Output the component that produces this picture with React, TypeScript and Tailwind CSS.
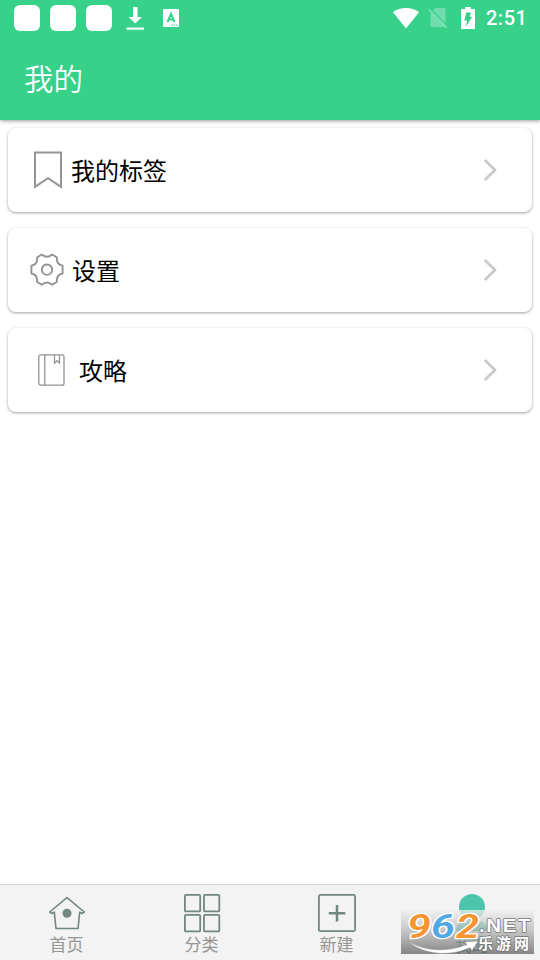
import React from "react";

const cjk = "font-['Noto_Sans_CJK_SC',sans-serif]";

function StatusBar() {
  return (
    <div className="flex h-9 items-center pl-[14px] pr-[13px] text-white">
      <div className="flex gap-[10px]">
        <span className="size-[26px] rounded-[6px] bg-white" />
        <span className="size-[26px] rounded-[6px] bg-white" />
        <span className="size-[26px] rounded-[6px] bg-white" />
      </div>
      <svg className="ml-[14px] h-6 w-[19px]" viewBox="0 0 19 24" fill="currentColor">
        <path d="M7 1h4.500v10H16l-6.700 6.500L2.500 11H7zM.5 21.500h17.500v2.300H.5z" />
      </svg>
      <svg className="ml-[18px] h-[18px] w-4" viewBox="0 0 16 18">
        <rect width="16" height="18" rx="1" fill="white" />
        <path d="M4.500 13 8 4.800 11.500 13M5.800 10.500h4.400" fill="none" stroke="#37d18a" strokeWidth="2" />
        <path d="M8.500 15.500h1.300v1.300H8.500zm2.300 0h1.300v1.300h-1.300zm2.400 0h1.300v1.300h-1.300z" fill="#37d18a" />
      </svg>
      <svg className="ml-auto h-[22px] w-[26px]" viewBox="0 0 26 22" fill="white">
        <path d="M0 5.200C7.500-.4 18.500-.4 26 5.200L13 21.500z" />
      </svg>
      <svg className="ml-[9px] h-[22px] w-5" viewBox="0 0 20 22">
        <path d="M7.500 1H16q1.500 0 1.500 1.500V20H3.800q-1.300 0-1.300-1.300V6z" fill="#73dcaf" />
        <path d="m2 1.500 18.500 18.500" stroke="#37d18a" strokeWidth="1.200" />
        <path d="m.7 2.500 18 18.500" stroke="#7ce0b2" strokeWidth="1.700" />
      </svg>
      <svg className="ml-[13px] h-[22px] w-[14px]" viewBox="0 0 14 22">
        <path d="M4.200 0h5.600v2H14v20H0V2h4.200z" fill="white" />
        <path d="M5.300 5.500h4.800L8.700 10H11.200L5 19.500 6 13.500H3.300z" fill="#37d18a" />
      </svg>
      <span className="ml-[11px] w-[41px] font-['Roboto',sans-serif] text-[20px] font-medium leading-6 tracking-[0.500px]">2:51</span>
    </div>
  );
}

function BookmarkIcon() {
  return (
    <svg className="h-10 w-[30px]" viewBox="0 0 30 40" fill="none" stroke="#949494" strokeWidth="2">
      <path d="M2 2.500h26v34.300L15 28.200 2 36.800z" />
    </svg>
  );
}

function GearIcon() {
  return (
    <svg className="h-[34px] w-[34px]" viewBox="0 0 34 34" fill="none" stroke="#949494" strokeWidth="1.900" strokeLinejoin="round">
      <path d="M11.800 1.500Q17 6 22.200 1.500L27 4.500Q26 11.300 32.600 12.800V20.500Q26 22 27 28.800L22.200 31.800Q17 27.300 11.800 31.800L7 28.800Q8 22 1.400 20.500V12.800Q8 11.300 7 4.500Z" />
      <circle cx="17" cy="16.700" r="5.200" />
    </svg>
  );
}

function GuideIcon() {
  return (
    <svg className="h-8 w-[27px]" viewBox="0 0 27 32" fill="none" stroke="#949494" strokeWidth="1.300">
      <rect x=".8" y=".8" width="25.200" height="30.400" rx="2" />
      <path d="M6.800 1v30M16.500 1v8l2.500-2.300L21.500 9V1" />
    </svg>
  );
}

function Row({ icon, label, spacing }: { icon: React.ReactNode; label: string; spacing: string }) {
  return (
    <div className={`flex h-[84px] items-center rounded-lg bg-white pr-[35px] shadow-[0_1px_3px_rgba(0,0,0,0.380)] ${spacing}`}>
      {icon}
      <span className="mb-px text-[24px] leading-9 text-black">{label}</span>
      <svg className="ml-auto h-[22px] w-[13px]" viewBox="0 0 13 22" fill="none" stroke="#c8c8c8" strokeWidth="2.600" strokeLinecap="round">
        <path d="m1.500 1.700 9.500 9.300-9.500 9.300" />
      </svg>
    </div>
  );
}

function HomeIcon() {
  return (
    <svg className="h-10 w-10" viewBox="0 0 40 40" fill="none" stroke="#72877f" strokeWidth="1.600" strokeLinejoin="round">
      <path d="M20 4.700 37.300 19l-2.300 1.500-2.300-1.400L31 35.500H9L7.300 19.100 5 20.500 2.700 19z" />
      <circle cx="20" cy="20.200" r="4.500" fill="#72877f" stroke="none" />
    </svg>
  );
}

function GridIcon() {
  return (
    <svg className="h-10 w-10" viewBox="0 0 40 40" fill="none" stroke="#72877f" strokeWidth="1.800">
      <rect x="2.900" y="1.900" width="15.300" height="16.500" rx="1" />
      <rect x="22" y="1.900" width="15.300" height="16.500" rx="1" />
      <rect x="2.900" y="21.900" width="15.300" height="16.500" rx="1" />
      <rect x="22" y="21.900" width="15.300" height="16.500" rx="1" />
    </svg>
  );
}

function PlusIcon() {
  return (
    <svg className="h-10 w-10" viewBox="0 0 40 40" fill="none" stroke="#72877f" strokeWidth="1.800">
      <rect x="1.900" y="1.900" width="36.200" height="36.200" rx="1.500" />
      <path d="M20 12v16.500M11.800 20.200h16.500" strokeWidth="2.500" />
    </svg>
  );
}

function MineIcon() {
  return (
    <svg className="h-10 w-10" viewBox="0 0 40 40" fill="#4bc6ad">
      <circle cx="20" cy="14" r="13" />
      <path d="M4 38c0-8 7-11 16-11s16 3 16 11z" />
    </svg>
  );
}

function Tab({ icon, label, color }: { icon: React.ReactNode; label: string; color: string }) {
  return (
    <div className={`flex w-[135px] flex-col items-center pr-[2px] pt-2 ${color}`}>
      {icon}
      <span className="mt-[-1px] text-[17px] leading-6">{label}</span>
    </div>
  );
}

function Watermark() {
  return (
    <svg className="absolute bottom-[6px] right-[6px] h-11 w-[133px]" viewBox="0 0 133 44">
      <defs>
        <linearGradient id="plate" x1="0" y1="0" x2="0" y2="1">
          <stop offset="0" stopColor="#f0f0f0" stopOpacity=".75" />
          <stop offset=".5" stopColor="#b2b2b2" stopOpacity=".75" />
          <stop offset="1" stopColor="#666" stopOpacity=".78" />
        </linearGradient>
      </defs>
      <rect width="133" height="44" fill="url(#plate)" />
      <path d="M7 31c15 10 38 12 59 3.500L63.500 32 77 31l-6 9.500-2-3C49 47 22 45 7 31z" fill="white" stroke="#999" strokeWidth=".5" />
      <g fontFamily="Roboto, sans-serif" fontWeight="600" fontStyle="italic" fontSize="33" stroke="white" strokeWidth="2.600" paintOrder="stroke" strokeLinejoin="round">
        <text x="6" y="28" textLength="24" lengthAdjust="spacingAndGlyphs" fill="#f59430">9</text>
        <text x="30" y="28" textLength="24" lengthAdjust="spacingAndGlyphs" fill="#50a9e2">6</text>
        <text x="55" y="28" textLength="23" lengthAdjust="spacingAndGlyphs" fill="#f59430">2</text>
      </g>
      <g fill="white" stroke="#777" strokeWidth="1.500" paintOrder="stroke" strokeLinejoin="round">
        <text x="78" y="22" textLength="53" lengthAdjust="spacingAndGlyphs" letterSpacing="1.5" fontFamily="Liberation Sans, sans-serif" fontWeight="700" fontSize="19">.NET</text>
        <text x="77" y="39" textLength="51" fontFamily="Noto Sans CJK SC, sans-serif" fontWeight="700" fontSize="15">乐游网</text>
      </g>
    </svg>
  );
}

export default function App() {
  return (
    <div className={`relative flex h-[960px] w-[540px] flex-col overflow-hidden bg-white ${cjk}`}>
      <header className="h-[120px] shrink-0 bg-[#37d18a] shadow-[0_1px_4px_rgba(0,0,0,0.400)]">
        <StatusBar />
        <h1 className="pl-6 pt-[19px] text-[29.500px] font-[350] leading-[44px] text-white">我的</h1>
      </header>
      <main className="flex flex-1 flex-col gap-4 px-2 pt-2">
        <Row icon={<BookmarkIcon />} label="我的标签" spacing="pl-[25px] gap-2" />
        <Row icon={<GearIcon />} label="设置" spacing="pl-[22px] gap-2" />
        <Row icon={<GuideIcon />} label="攻略" spacing="pl-[29.500px] gap-[14.500px]" />
      </main>
      <nav className="flex h-[76px] shrink-0 border-t border-[#d9d9d9] bg-[#f3f3f3]">
        <Tab icon={<HomeIcon />} label="首页" color="text-[#969696]" />
        <Tab icon={<GridIcon />} label="分类" color="text-[#969696]" />
        <Tab icon={<PlusIcon />} label="新建" color="text-[#969696]" />
        <Tab icon={<MineIcon />} label="我的" color="text-[#0f8f68]" />
      </nav>
      <Watermark />
    </div>
  );
}
